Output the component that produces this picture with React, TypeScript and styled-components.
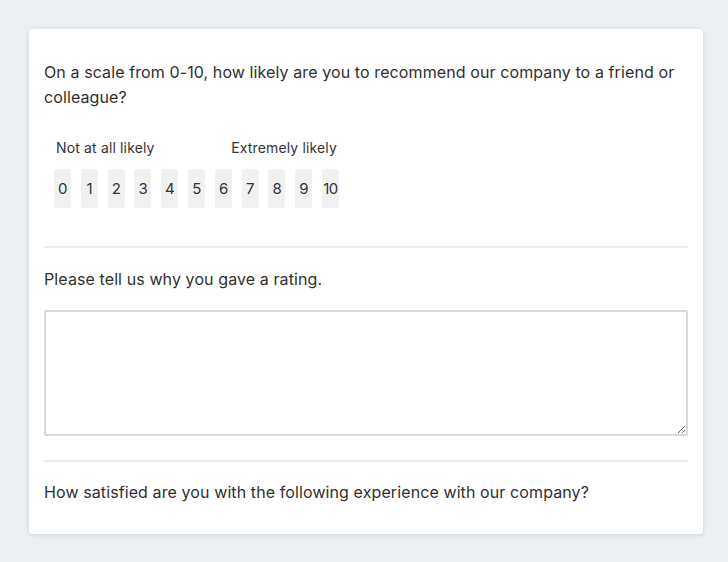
import React from "react";
import styled, { createGlobalStyle } from "styled-components";

const Global = createGlobalStyle`
  html, body { margin: 0; padding: 0; background: #edf0f3; }
  body { font-family: Inter, "Liberation Sans", sans-serif; color: #2f2f2f; }
  * { box-sizing: border-box; }
`;

const Page = styled.div`
  padding: 29px 25px 29px 29px;
`;

const Card = styled.div`
  background: #fff;
  border-radius: 4px;
  box-shadow: 0 1px 5px rgba(0, 0, 0, 0.12);
  padding: 0 15px;
`;

const Section = styled.div<{ $top: number; $bottom: number; $divider?: boolean }>`
  padding-top: ${(p) => p.$top}px;
  padding-bottom: ${(p) => p.$bottom}px;
  border-bottom: ${(p) => (p.$divider ? "2px solid #ebebeb" : "none")};
`;

const Question = styled.p`
  margin: 0;
  font-size: 16px;
  line-height: 25px;
  letter-spacing: 0.1px;
  color: #2f2f2f;
`;

const Scale = styled.div`
  display: inline-flex;
  flex-direction: column;
  margin-top: 28px;
  margin-left: 10px;
`;

const Labels = styled.div`
  display: flex;
  justify-content: space-between;
  padding: 0 2px;
  font-size: 14px;
  line-height: 20px;
  letter-spacing: 0.15px;
  color: #333;
`;

const Buttons = styled.div`
  display: flex;
  gap: 9.8px;
  margin-top: 11px;
`;

const ScoreButton = styled.button`
  width: 17px;
  height: 39px;
  padding: 0;
  border: none;
  border-radius: 3px;
  background: #f1f1f1;
  font-family: inherit;
  font-size: 15px;
  color: #333;
  letter-spacing: -0.5px;
  display: flex;
  align-items: center;
  justify-content: center;
  cursor: pointer;
`;

const TextArea = styled.textarea`
  display: block;
  width: 100%;
  height: 126px;
  margin-top: 18px;
  border: 2px solid #d9d9d9;
  border-radius: 2px;
  resize: vertical;
  font-family: inherit;
  font-size: 15px;
  outline: none;
`;

export default function App() {
  const scores = Array.from({ length: 11 }, (_, i) => i);
  return (
    <>
      <Global />
      <Page>
        <Card>
          <Section $top={31} $bottom={38} $divider>
            <Question>
              On a scale from 0-10, how likely are you to recommend our company to a friend or
              colleague?
            </Question>
            <Scale>
              <Labels>
                <span>Not at all likely</span>
                <span>Extremely likely</span>
              </Labels>
              <Buttons>
                {scores.map((s) => (
                  <ScoreButton key={s}>{s}</ScoreButton>
                ))}
              </Buttons>
            </Scale>
          </Section>
          <Section $top={19} $bottom={24} $divider>
            <Question>Please tell us why you gave a rating.</Question>
            <TextArea />
          </Section>
          <Section $top={18} $bottom={29}>
            <Question>How satisfied are you with the following experience with our company?</Question>
          </Section>
        </Card>
      </Page>
    </>
  );
}
